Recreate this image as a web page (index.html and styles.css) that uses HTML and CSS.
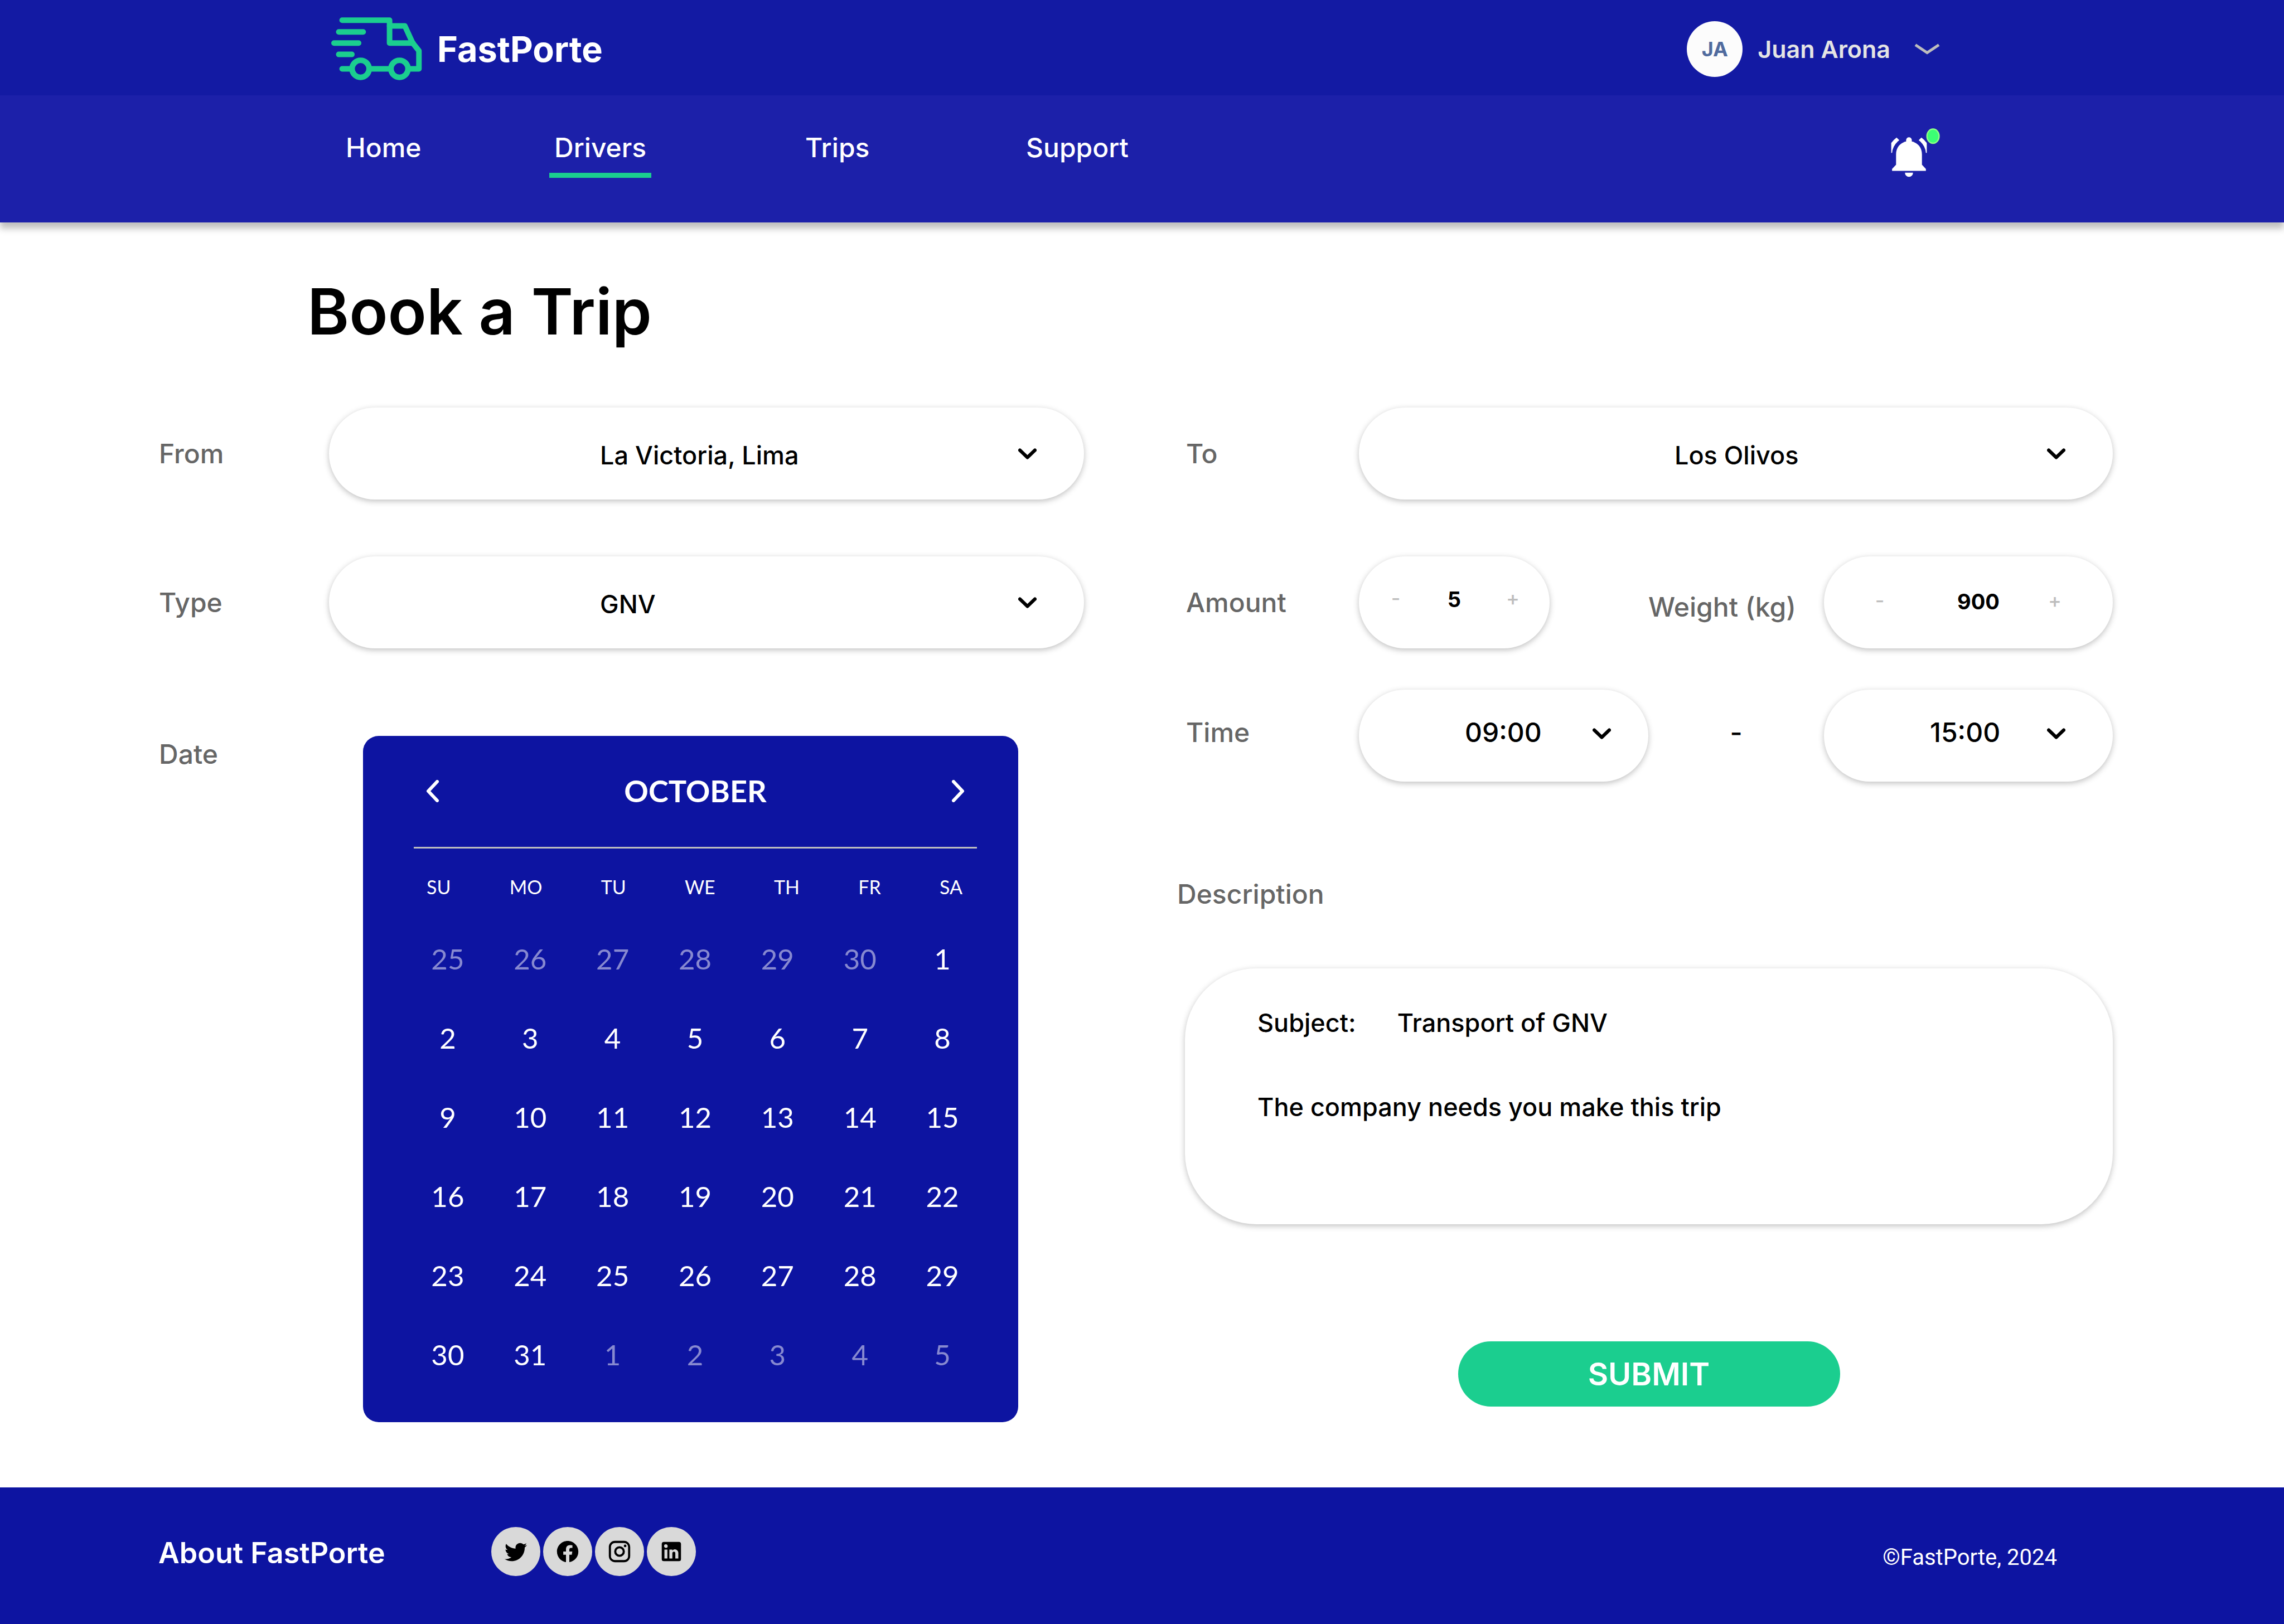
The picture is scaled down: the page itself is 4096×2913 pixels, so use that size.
FILE: index.html
```html
<!DOCTYPE html>
<html lang="en">
<head>
<meta charset="utf-8">
<meta name="viewport" content="width=device-width, initial-scale=1">
<title>FastPorte - Book a Trip</title>
<link rel="stylesheet" href="styles.css">
</head>
<body>
<header class="header">
  <div class="topbar">
    <a class="brand" href="#">
      <svg class="brand-icon" viewBox="56 47 229 158" aria-hidden="true">
        <g fill="none" stroke="currentColor" stroke-width="14" stroke-linecap="round" stroke-linejoin="round">
          <path d="M83.5 54H203V111.7H262"/>
          <path d="M203 68.4h38.5L261 111l16 20v45.5H256"/>
          <path d="M83.5 176.5h20M158 176.5h42"/>
          <path d="M75 83.4h61.500M63 111.700h62M75 140.200h33"/>
          <circle cx="130" cy="176.500" r="21.500"/>
          <circle cx="228" cy="176.500" r="21.500"/>
        </g>
      </svg>
      <span>FastPorte</span>
    </a>
    <button class="user" type="button">
      <span class="avatar">JA</span>
      <span class="user-name">Juan Arona</span>
      <svg class="user-chevron" viewBox="0 0 46 20" aria-hidden="true"><path d="M2 2.500L23 16.500L44 2.500" fill="none" stroke="currentColor" stroke-width="5"/></svg>
    </button>
  </div>
  <div class="navbar">
    <nav class="nav">
      <a class="nav-link" href="#">Home</a>
      <a class="nav-link active" href="#" aria-current="page">Drivers</a>
      <a class="nav-link" href="#">Trips</a>
      <a class="nav-link" href="#">Support</a>
    </nav>
    <button class="bell" type="button" aria-label="Notifications">
      <svg viewBox="569 324 123 124" aria-hidden="true">
        <g fill="#fff">
          <path d="M581.600 416.400V390C581.600 373 592 360.500 607 357.600V354a7.200 7.200 0 0 1 14.400 0v3.600C636.500 360.500 647 373 647 390v26.400l10 10.300v5H571.500v-5z"/>
          <path d="M604 436.300h20.500a10.250 10.500 0 0 1-20.500 0z"/>
          <path d="M569.400 361.700Q574 354 583 347.500L589.800 354.400Q573 367 571.600 386.500H569.400z"/>
          <path d="M659.200 361.700Q654.600 354 645.600 347.500L638.800 354.400Q655.600 367 657 386.500H659.200z"/>
        </g>
        <ellipse cx="675" cy="344" rx="15.300" ry="18" fill="#3cff74" stroke="#8dff85" stroke-width="3.400"/>
      </svg>
    </button>
  </div>
</header>

<main class="main">
  <h1 class="title">Book a Trip</h1>
  <form class="form">
    <div class="col col-left">
      <div class="field">
        <label class="label" for="from">From</label>
        <div class="pill select">
          <select id="from"><option>La Victoria, Lima</option></select>
          <svg class="chevron" viewBox="0 0 33 20" aria-hidden="true"><path d="M3 3.500L16.500 16.500L30 3.500"/></svg>
        </div>
      </div>
      <div class="field">
        <label class="label" for="type">Type</label>
        <div class="pill select">
          <select id="type"><option>GNV</option></select>
          <svg class="chevron" viewBox="0 0 33 20" aria-hidden="true"><path d="M3 3.500L16.500 16.500L30 3.500"/></svg>
        </div>
      </div>
      <div class="field field-date">
        <span class="label" id="date-label">Date</span>
        <section class="calendar" aria-labelledby="date-label">
          <div class="cal-head">
            <button class="cal-arrow" type="button" aria-label="Previous month"><svg viewBox="0 0 24 40" aria-hidden="true"><path d="M20 3L4 20L20 37"/></svg></button>
            <h2 class="cal-month">OCTOBER</h2>
            <button class="cal-arrow" type="button" aria-label="Next month"><svg viewBox="0 0 24 40" aria-hidden="true"><path d="M4 3L20 20L4 37"/></svg></button>
          </div>
          <table class="cal-table">
            <thead><tr><th>SU</th><th>MO</th><th>TU</th><th>WE</th><th>TH</th><th>FR</th><th>SA</th></tr></thead>
            <tbody>
              <tr><td class="off">25</td><td class="off">26</td><td class="off">27</td><td class="off">28</td><td class="off">29</td><td class="off">30</td><td>1</td></tr>
              <tr><td>2</td><td>3</td><td>4</td><td>5</td><td>6</td><td>7</td><td>8</td></tr>
              <tr><td>9</td><td>10</td><td>11</td><td>12</td><td>13</td><td>14</td><td>15</td></tr>
              <tr><td>16</td><td>17</td><td>18</td><td>19</td><td>20</td><td>21</td><td>22</td></tr>
              <tr><td>23</td><td>24</td><td>25</td><td>26</td><td>27</td><td>28</td><td>29</td></tr>
              <tr><td>30</td><td>31</td><td class="off">1</td><td class="off">2</td><td class="off">3</td><td class="off">4</td><td class="off">5</td></tr>
            </tbody>
          </table>
        </section>
      </div>
    </div>

    <div class="col col-right">
      <div class="row">
        <label class="label" for="to">To</label>
        <div class="pill select select-to">
          <select id="to"><option>Los Olivos</option></select>
          <svg class="chevron" viewBox="0 0 33 20" aria-hidden="true"><path d="M3 3.500L16.500 16.500L30 3.500"/></svg>
        </div>
      </div>
      <div class="row row-load">
        <label class="label" for="amount">Amount</label>
        <div class="pill stepper">
          <button type="button" aria-label="Less">-</button>
          <input id="amount" type="text" inputmode="numeric" value="5">
          <button type="button" aria-label="More">+</button>
        </div>
        <label class="label label-weight" for="weight">Weight (kg)</label>
        <div class="pill stepper stepper-wide">
          <button type="button" aria-label="Less">-</button>
          <input id="weight" type="text" inputmode="numeric" value="900">
          <button type="button" aria-label="More">+</button>
        </div>
      </div>
      <div class="row row-time">
        <label class="label" for="start">Time</label>
        <div class="pill select select-start">
          <select id="start"><option>09:00</option></select>
          <svg class="chevron" viewBox="0 0 33 20" aria-hidden="true"><path d="M3 3.500L16.500 16.500L30 3.500"/></svg>
        </div>
        <span class="dash">-</span>
        <div class="pill select select-end">
          <select id="end" aria-label="End time"><option>15:00</option></select>
          <svg class="chevron" viewBox="0 0 33 20" aria-hidden="true"><path d="M3 3.500L16.500 16.500L30 3.500"/></svg>
        </div>
      </div>
      <label class="label label-description" for="description">Description</label>
      <div class="message">
        <div class="subject">
          <label for="subject">Subject:</label>
          <input id="subject" type="text" value="Transport of GNV">
        </div>
        <textarea id="description">The company needs you make this trip</textarea>
      </div>
      <button class="submit" type="submit">SUBMIT</button>
    </div>
  </form>
</main>

<footer class="footer">
  <a class="about" href="#">About FastPorte</a>
  <div class="social">
    <a href="#" aria-label="Twitter"><svg viewBox="0 0 24 24" aria-hidden="true"><path d="M22.460 6c-.770.350-1.600.580-2.460.690.880-.530 1.560-1.370 1.880-2.380-.830.500-1.750.850-2.720 1.050C18.370 4.500 17.260 4 16 4c-2.350 0-4.270 1.920-4.270 4.290 0 .340.040.670.110.980C8.280 9.090 5.110 7.380 3 4.790c-.370.630-.580 1.370-.580 2.150 0 1.490.750 2.810 1.910 3.560-.710 0-1.370-.200-1.950-.500v.030c0 2.080 1.480 3.820 3.440 4.210a4.220 4.220 0 0 1-1.930.070 4.280 4.280 0 0 0 4 2.980 8.521 8.521 0 0 1-5.330 1.840c-.340 0-.680-.020-1.020-.060C3.440 20.290 5.700 21 8.120 21 16 21 20.330 14.460 20.330 8.790c0-.190 0-.370-.010-.560.840-.600 1.560-1.360 2.140-2.230z"/></svg></a>
    <a href="#" aria-label="Facebook"><svg viewBox="0 0 24 24" aria-hidden="true"><path d="M12 2.040C6.500 2.040 2 6.530 2 12.060c0 5 3.660 9.150 8.440 9.900v-7H7.900v-2.900h2.540V9.850c0-2.510 1.490-3.890 3.780-3.890 1.090 0 2.230.190 2.230.190v2.470h-1.260c-1.240 0-1.630.770-1.630 1.560v1.880h2.780l-.450 2.900h-2.330v7a10 10 0 0 0 8.440-9.900c0-5.530-4.500-10.020-10-10.020z"/></svg></a>
    <a href="#" aria-label="Instagram"><svg viewBox="0 0 24 24" aria-hidden="true"><path d="M7.800 2h8.400C19.400 2 22 4.600 22 7.800v8.400a5.800 5.800 0 0 1-5.800 5.800H7.800C4.600 22 2 19.400 2 16.200V7.800A5.800 5.800 0 0 1 7.800 2m-.200 2A3.600 3.600 0 0 0 4 7.600v8.800C4 18.390 5.610 20 7.600 20h8.800a3.600 3.600 0 0 0 3.600-3.600V7.600C20 5.610 18.390 4 16.400 4H7.600m9.650 1.500a1.250 1.250 0 1 1 0 2.500 1.250 1.250 0 0 1 0-2.500M12 7a5 5 0 1 1 0 10 5 5 0 0 1 0-10m0 2a3 3 0 1 0 0 6 3 3 0 0 0 0-6z"/></svg></a>
    <a href="#" aria-label="LinkedIn"><svg viewBox="0 0 24 24" aria-hidden="true"><path d="M19 3a2 2 0 0 1 2 2v14a2 2 0 0 1-2 2H5a2 2 0 0 1-2-2V5a2 2 0 0 1 2-2h14m-.500 15.500v-5.300a3.260 3.260 0 0 0-3.260-3.260c-.850 0-1.840.520-2.320 1.300v-1.110h-2.790v8.370h2.790v-4.930c0-.770.620-1.400 1.390-1.400a1.400 1.400 0 0 1 1.400 1.400v4.930h2.790M6.880 8.560a1.680 1.680 0 0 0 1.680-1.680c0-.930-.750-1.690-1.680-1.690a1.690 1.690 0 0 0-1.690 1.690c0 .930.760 1.680 1.690 1.680m1.390 9.940v-8.370H5.500v8.370h2.770z"/></svg></a>
  </div>
  <p class="copyright">©FastPorte, 2024</p>
</footer>
</body>
</html>
```
FILE: styles.css
```css
:root {
  --blue: #0d14a1;
  --green: #1bce8f;
  --label: #666;
  --shadow: 0 3px 11px rgba(0, 0, 0, .25);
}

* { box-sizing: border-box; }

body {
  margin: 0;
  min-height: 100vh;
  display: flex;
  flex-direction: column;
  background: #fff;
  color: #000;
  font-family: Inter, "Liberation Sans", sans-serif;
  font-weight: 500;
  font-size: 45px;
  line-height: 54px;
}

button, input, select, textarea {
  margin: 0;
  padding: 0;
  border: 0;
  background: none;
  color: inherit;
  font: inherit;
}

a { color: inherit; text-decoration: none; }
svg { display: block; flex: none; }

/* Header */
.header {
  color: #fff;
  box-shadow: 0 11px 11px rgba(0, 0, 0, .25);
}

.topbar, .navbar {
  display: flex;
  justify-content: space-between;
  padding-right: 617px;
}

.topbar {
  align-items: center;
  height: 171px;
  padding-top: 4px;
  padding-left: 594px;
  background: #131aa3;
}

.brand {
  display: flex;
  align-items: center;
  gap: 27px;
  font-size: 63px;
  line-height: 76px;
  font-weight: 700;
}

.brand-icon { width: 163px; height: 113px; color: var(--green); }

.user { display: flex; align-items: center; color: #e4e4e4; }

.avatar {
  width: 100px;
  height: 100px;
  margin-right: 27px;
  border-radius: 50%;
  background: #fcfcfc;
  color: #506b9e;
  font-size: 36px;
  line-height: 100px;
  font-weight: 700;
}

.user-name { font-size: 43px; font-weight: 600; }
.user-chevron { width: 46px; height: 20px; margin-left: 43px; color: #bdbdbd; }

.navbar {
  align-items: flex-start;
  height: 228px;
  padding-top: 59px;
  padding-left: 611px;
  background: #1c20a9;
}

.nav {
  display: grid;
  grid-template-columns: 374px 450px 396px auto;
  justify-items: start;
  padding-top: 6px;
  font-size: 48px;
  line-height: 58px;
}

.nav-link { padding: 0 9px 16px; border-bottom: 9px solid transparent; }
.nav-link.active { border-color: var(--green); }
.bell svg { width: 88px; height: 88px; }

/* Booking form */
.main { flex: 1; padding: 91px 307px 117px 285px; }

.title {
  margin: 0 0 103px;
  padding-left: 266px;
  font-size: 114px;
  line-height: 138px;
  font-weight: 600;
}

.form {
  display: grid;
  grid-template-columns: 1659fr 1664fr;
  gap: 181px;
}

.col { display: flex; flex-direction: column; }

.field {
  display: grid;
  grid-template-columns: 305fr 1354fr;
  align-items: center;
  margin-bottom: 102px;
}

.field-date { align-items: start; margin: 55px 0 0; }
.field-date .label { padding-top: 4px; }

.row {
  display: grid;
  grid-template-columns: 312fr 342fr 177fr 315fr 518fr;
  align-items: center;
  margin-bottom: 102px;
}

.row > .select-to { grid-column: 2 / -1; }
.row > .select-start { grid-column: 2 / 4; }

.label { color: var(--label); font-size: 48px; line-height: 58px; }
.row > .label { padding-left: 2px; }
.row > .label-weight { grid-column: 4; padding: 16px 0 0; }

.pill {
  min-width: 0;
  height: 165px;
  border-radius: 83px;
  background: #fff;
  box-shadow: var(--shadow);
}

.select { display: grid; align-items: center; }
.select > * { grid-area: 1 / 1; }

.select select {
  appearance: none;
  width: 100%;
  height: 165px;
  padding: 6px 120px 0 486px;
  border-radius: 83px;
}

.chevron {
  justify-self: end;
  width: 33px;
  height: 20px;
  margin-right: 85px;
  pointer-events: none;
}

.chevron path, .cal-arrow path {
  fill: none;
  stroke: currentColor;
  stroke-width: 6;
  stroke-linecap: round;
  stroke-linejoin: round;
}

.select-to select { padding-left: 566px; }

.row-load { margin-bottom: 74px; }

.stepper {
  display: grid;
  grid-template-columns: 132fr 78fr 132fr;
  align-items: center;
  padding-bottom: 12px;
}

.stepper-wide {
  grid-template-columns: 200fr 154fr 120fr;
  padding: 0 44px 4px 0;
}

.stepper button {
  padding-bottom: 4px;
  color: #bdbdbd;
  font-size: 36px;
  line-height: 44px;
}

.stepper input {
  width: 100%;
  text-align: center;
  font-size: 38px;
  line-height: 46px;
  font-weight: 700;
}

.row-time { margin-bottom: 0; font-size: 48px; line-height: 58px; }
.row-time > .label, .row-time .dash { padding-bottom: 12px; }
.row-time .select select { padding: 0 100px 12px 190px; }
.row-time .chevron { margin-bottom: 8px; }
.select-start .chevron { margin-right: 67px; }
.dash { text-align: center; }

.label-description { margin: 173px 0 104px -14px; }

.message {
  display: grid;
  gap: 97px;
  padding: 71px 128px 67px 130px;
  border-radius: 128px;
  box-shadow: var(--shadow);
}

.subject { display: flex; gap: 74px; }
.subject input { flex: 1; }
.message textarea { height: 170px; resize: none; overflow: hidden; }

.submit {
  align-self: center;
  width: 685px;
  height: 117px;
  margin-top: 210px;
  border-radius: 59px;
  background: var(--green);
  color: #fff;
  font-size: 56px;
  line-height: 68px;
  font-weight: 600;
}

/* Calendar */
.calendar {
  margin: 0 118px 0 61px;
  padding: 0 74px 50px 91px;
  border-radius: 28px;
  background: var(--blue);
  color: #fff;
  font-family: Lato, "Liberation Sans", sans-serif;
}

.cal-head {
  display: flex;
  justify-content: space-between;
  align-items: center;
  height: 202px;
  padding: 0 22px 2px;
  border-bottom: 3px solid #bfbfbf;
}

.cal-month { margin: 0; font-size: 54px; line-height: 68px; font-weight: 700; }
.cal-arrow svg { width: 24px; height: 40px; }

.cal-table { display: block; margin: 0 -12px 0 -13px; font-weight: 400; }
.cal-table thead, .cal-table tbody { display: block; }
.cal-table th, .cal-table td { padding: 0; font-weight: 400; }

.cal-table thead tr {
  display: flex;
  justify-content: space-between;
  height: 127px;
  padding: 49px 38px 0 36px;
  font-size: 34px;
  line-height: 40px;
}

.cal-table tbody tr {
  display: grid;
  grid-template-columns: repeat(7, 1fr);
  font-size: 51px;
  line-height: 142px;
}

.cal-table td { text-align: center; }
.cal-table .off { color: #8789d0; }

/* Footer */
.footer {
  display: flex;
  align-items: center;
  height: 245px;
  padding: 0 407px 16px 284px;
  background: var(--blue);
  color: #fff;
}

.about { padding-top: 6px; font-size: 52px; line-height: 62px; font-weight: 600; }
.social { display: flex; gap: 5px; margin-left: 190px; }

.social a {
  display: grid;
  place-items: center;
  width: 88px;
  height: 88px;
  border-radius: 50%;
  background: #d9d9d9;
}

.social svg { width: 46px; height: 46px; fill: #000; }

.copyright {
  margin: 0 0 0 auto;
  padding-top: 22px;
  font-family: Roboto, "Liberation Sans", sans-serif;
  font-size: 40px;
  line-height: 48px;
  font-weight: 400;
}
```
